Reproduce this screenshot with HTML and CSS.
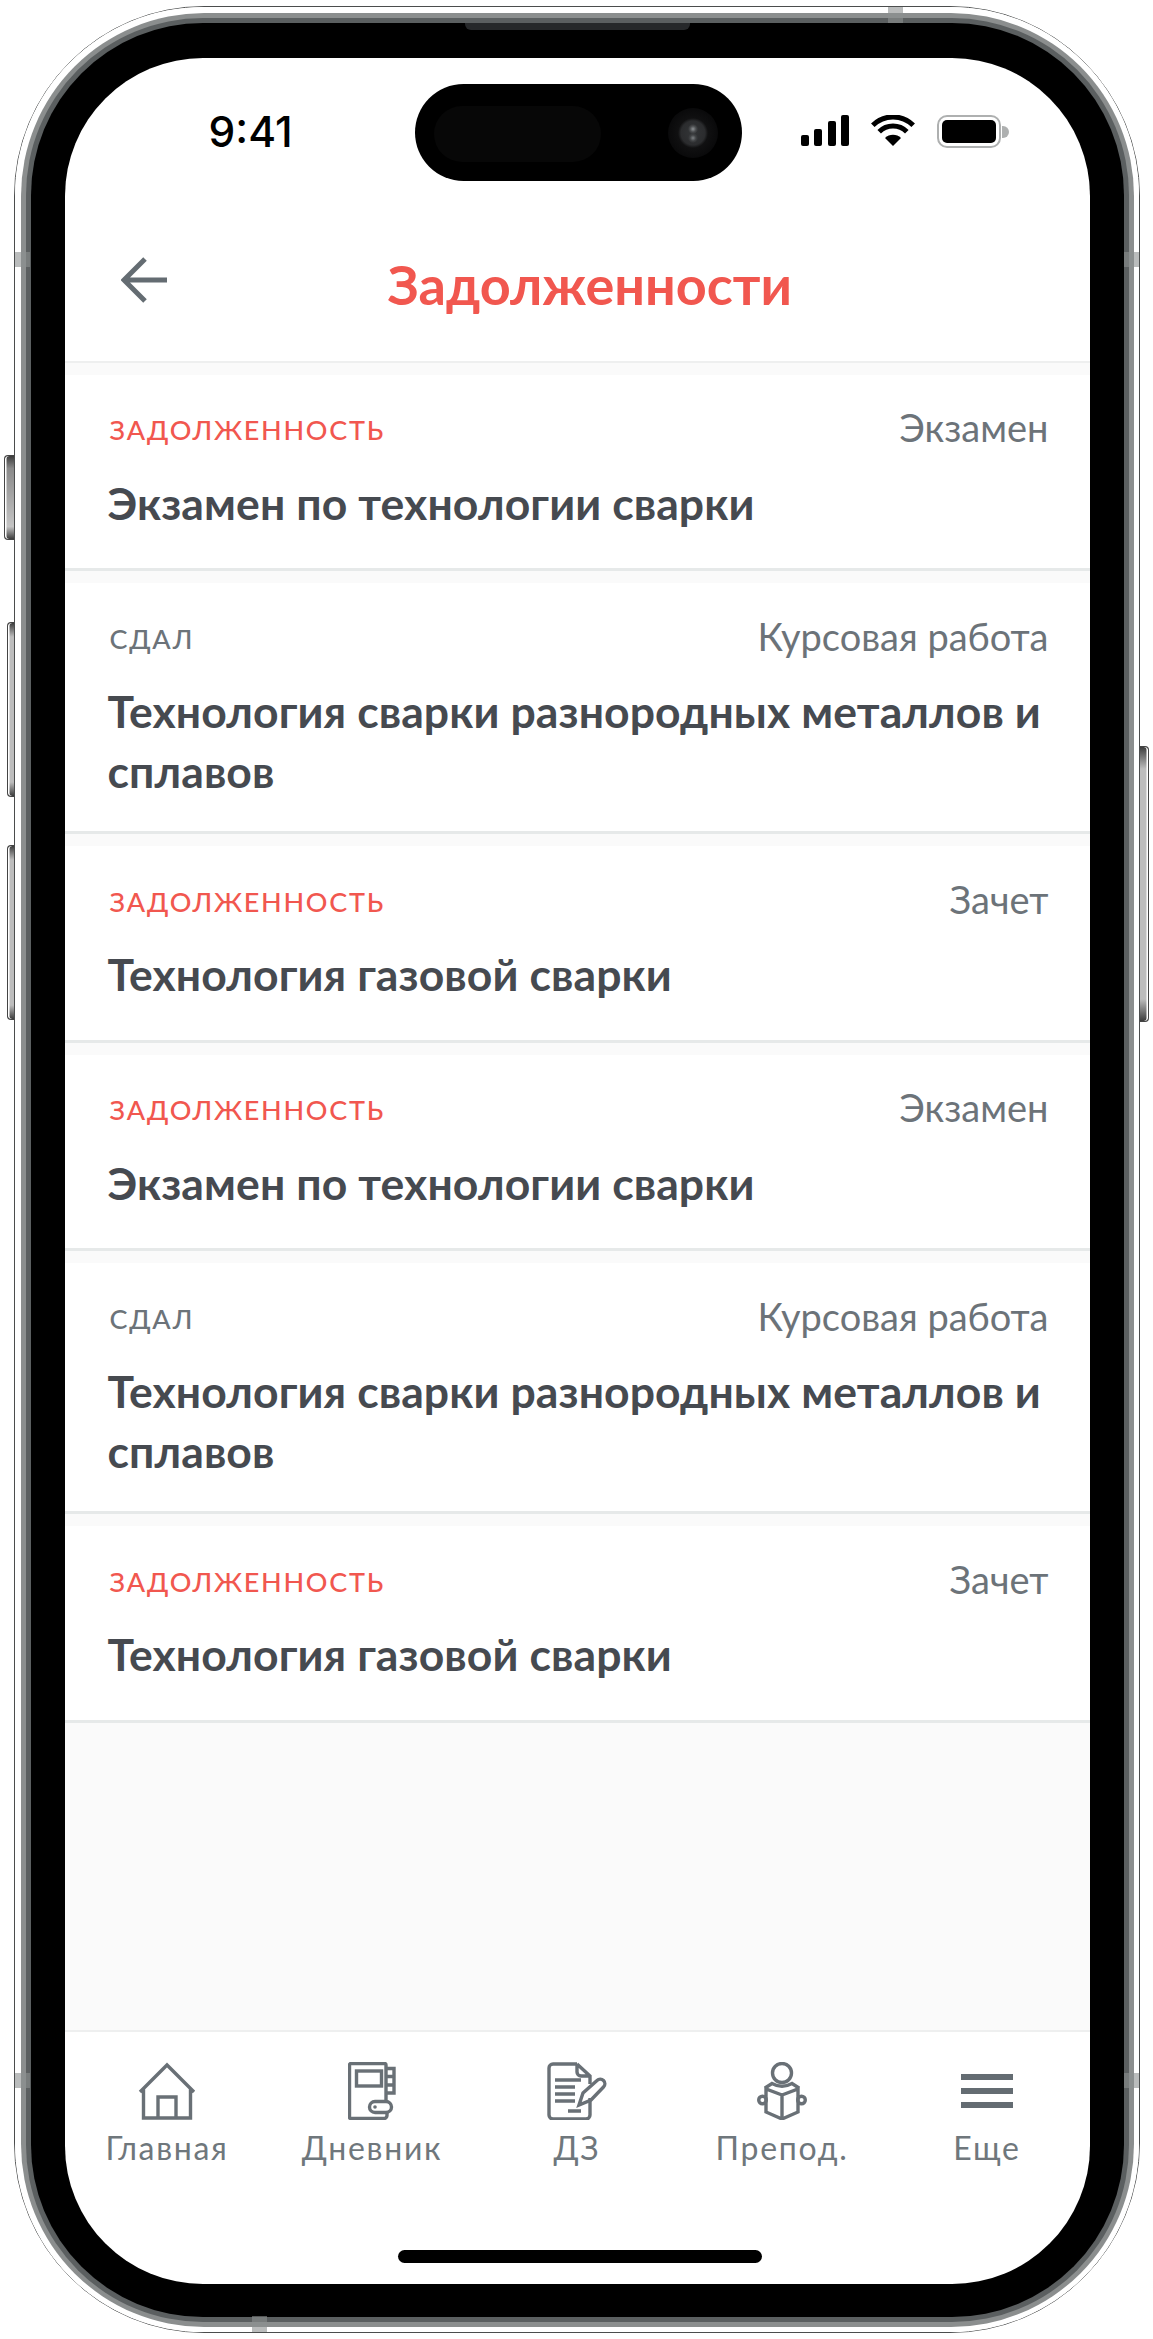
FILE: index.html
```html
<!DOCTYPE html>
<html lang="ru">
<head>
    <meta charset="UTF-8">
    <meta name="viewport" content="width=device-width, initial-scale=1.0">
    <title>Задолженности</title>
    <link rel="stylesheet" href="styles.css">
</head>
<body>
    <div class="phone">
        <!-- Side buttons and antenna bands -->
        <span class="side-btn mute"></span>
        <span class="side-btn vol-up"></span>
        <span class="side-btn vol-down"></span>
        <span class="side-btn power"></span>
        <span class="band band-left-top"></span>
        <span class="band band-right-top"></span>
        <span class="band band-left-bottom"></span>
        <span class="band band-right-bottom"></span>
        <span class="band band-top"></span>
        <span class="band band-bottom"></span>

        <div class="ring">
            <div class="edge">
                <div class="bezel">
                    <span class="speaker"></span>
                    <div class="screen">
                        <div class="island">
                            <span class="island-sensor"></span>
                            <span class="island-camera"></span>
                        </div>

                        <div class="status">
                            <span class="time">9:41</span>
                            <div class="status-icons">
                                <svg class="signal" width="48" height="31" viewBox="0 0 48 31">
                                    <rect x="0" y="20" width="8" height="11" rx="2"/>
                                    <rect x="13" y="14" width="8" height="17" rx="2"/>
                                    <rect x="27" y="6" width="8" height="25" rx="2"/>
                                    <rect x="40" y="0" width="8" height="31" rx="2"/>
                                </svg>
                                <svg class="wifi" width="44" height="31" viewBox="0 0 44 31">
                                    <path d="M22 31 L14 23 A11.3 11.3 0 0 1 30 23 Z" fill="#000"/>
                                    <path d="M8.2 16.7 A19.5 19.5 0 0 1 35.8 16.7" fill="none" stroke="#000" stroke-width="5"/>
                                    <path d="M1.8 10.3 A28.5 28.5 0 0 1 42.2 10.3" fill="none" stroke="#000" stroke-width="5"/>
                                </svg>
                                <div class="battery"><span class="battery-fill"></span></div>
                                <span class="battery-nub"></span>
                            </div>
                        </div>

                        <header class="nav">
                            <svg class="back" width="46" height="46" viewBox="0 0 46 46">
                                <path d="M46 23 H4 M24 2 L3 23 L24 44" fill="none" stroke="#646c72" stroke-width="5"/>
                            </svg>
                            <h1 class="title">Задолженности</h1>
                        </header>

                        <main class="list">
                            <article class="row">
                                <div class="row-top">
                                    <span class="tag debt">ЗАДОЛЖЕННОСТЬ</span>
                                    <span class="kind">Экзамен</span>
                                </div>
                                <h2 class="subject">Экзамен по технологии сварки</h2>
                            </article>
                            <article class="row">
                                <div class="row-top">
                                    <span class="tag">СДАЛ</span>
                                    <span class="kind">Курсовая работа</span>
                                </div>
                                <h2 class="subject">Технология сварки разнородных металлов и сплавов</h2>
                            </article>
                            <article class="row">
                                <div class="row-top">
                                    <span class="tag debt">ЗАДОЛЖЕННОСТЬ</span>
                                    <span class="kind">Зачет</span>
                                </div>
                                <h2 class="subject">Технология газовой сварки</h2>
                            </article>
                            <article class="row">
                                <div class="row-top">
                                    <span class="tag debt">ЗАДОЛЖЕННОСТЬ</span>
                                    <span class="kind">Экзамен</span>
                                </div>
                                <h2 class="subject">Экзамен по технологии сварки</h2>
                            </article>
                            <article class="row">
                                <div class="row-top">
                                    <span class="tag">СДАЛ</span>
                                    <span class="kind">Курсовая работа</span>
                                </div>
                                <h2 class="subject">Технология сварки разнородных металлов и сплавов</h2>
                            </article>
                            <article class="row">
                                <div class="row-top">
                                    <span class="tag debt">ЗАДОЛЖЕННОСТЬ</span>
                                    <span class="kind">Зачет</span>
                                </div>
                                <h2 class="subject">Технология газовой сварки</h2>
                            </article>
                        </main>

                        <footer class="tabbar">
                            <nav class="tabs">
                                <a class="tab">
                                    <svg width="58" height="58" viewBox="0 0 58 58">
                                        <path d="M2 30 L29 3 L56 30 M5.5 27 V56 H52.5 V27 M20 56 V35 H38 V56"/>
                                    </svg>
                                    <span>Главная</span>
                                </a>
                                <a class="tab">
                                    <svg width="48" height="58" viewBox="0 0 48 58">
                                        <path d="M38 39 V3 a1.5 1.5 0 0 0 -1.5 -1.5 H3 a1.5 1.5 0 0 0 -1.5 1.5 V55 a1.5 1.5 0 0 0 1.5 1.5 H36 a3 3 0 0 0 3 -3 V50"/>
                                        <rect x="8.5" y="9" width="25" height="15"/>
                                        <path d="M39 6.5 H46 V31 H39 M39 14.5 H46 M39 23 H46"/>
                                        <rect x="21.5" y="39.5" width="22" height="11" rx="5.5"/>
                                        <circle class="dot" cx="27" cy="45" r="1.8"/>
                                    </svg>
                                    <span>Дневник</span>
                                </a>
                                <a class="tab">
                                    <svg width="60" height="58" viewBox="0 0 60 58">
                                        <path d="M30 2 H6 a4 4 0 0 0 -4 4 V53 a4 4 0 0 0 4 4 H39 a4 4 0 0 0 4 -4 V36"/>
                                        <path d="M30 2 L43 14 V22 M30 2 V10 a4 4 0 0 0 4 4 H43"/>
                                        <path d="M8 18 H34 M8 25 H28 M8 32 H28 M8 39 H28 M21 49 H34"/>
                                        <path d="M32 43 L36 31 L50 18.5 a4.5 4.5 0 0 1 6.5 6.5 L44 38 Z"/>
                                    </svg>
                                    <span>ДЗ</span>
                                </a>
                                <a class="tab">
                                    <svg width="50" height="58" viewBox="0 0 50 58">
                                        <circle cx="25" cy="11" r="9.5"/>
                                        <path d="M25 33 L9 27 V50 L25 57 L41 50 V27 Z M25 33 V57"/>
                                        <path d="M8 26 L15 21.5 Q25 27 35 21.5 L42 26"/>
                                        <circle cx="5.5" cy="38" r="3.8"/>
                                        <circle cx="44.5" cy="38" r="3.8"/>
                                    </svg>
                                    <span>Препод.</span>
                                </a>
                                <a class="tab">
                                    <div class="burger">
                                        <i></i><i></i><i></i>
                                    </div>
                                    <span>Еще</span>
                                </a>
                            </nav>
                            <div class="home-bar"></div>
                        </footer>
                    </div>
                </div>
            </div>
        </div>
    </div>
</body>
</html>
```

FILE: styles.css
```css
body {
    margin: 0;
    background: #fff;
    font-family: Lato, "Open Sans", sans-serif;
}

/* Device frame */
.phone {
    position: relative;
    box-sizing: border-box;
    width: 1126px;
    height: 2327px;
    margin: 6px 0 0 14px;
    border: 1.5px solid #4b4d4d;
    border-radius: 190px;
}
.ring {
    box-sizing: border-box;
    height: 100%;
    padding: 5.5px;
    background: #fff;
    border-radius: 188px;
}
.edge {
    box-sizing: border-box;
    height: 100%;
    padding: 10px;
    background: #8b8e8e;
    border-radius: 183px;
}
.bezel {
    position: relative;
    box-sizing: border-box;
    height: 100%;
    padding: 35px 34px 33px;
    background: #000;
    border-radius: 172px;
    box-shadow: 0 0 0 5px #5b5f60;
}
.speaker {
    position: absolute;
    top: 0;
    left: 434px;
    width: 225px;
    height: 7px;
    background: #26282a;
    border-radius: 0 0 6px 6px;
}
.band {
    position: absolute;
    z-index: 1;
    background: rgba(140, 144, 144, 0.6);
}
.band-left-top, .band-right-top, .band-left-bottom, .band-right-bottom {
    width: 15px;
    height: 15px;
}
.band-left-top { top: 245px; left: 0; }
.band-right-top { top: 245px; right: 0; }
.band-left-bottom { top: 2066px; left: 0; }
.band-right-bottom { top: 2066px; right: 0; }
.band-top, .band-bottom {
    width: 15px;
    height: 16px;
}
.band-top { top: 0; left: 873px; }
.band-bottom { bottom: 0; left: 237px; }
.side-btn {
    position: absolute;
    box-sizing: border-box;
    border: 1.5px solid #444;
    border-right: 0;
    border-radius: 4px 0 0 4px;
    background: linear-gradient(#3c3c3c, #bdbdbd 8%, #bdbdbd 92%, #3c3c3c);
    box-shadow: inset 1.5px 0 0 #fff;
}
.mute { left: -11.5px; top: 448px; width: 10px; height: 85px; background: linear-gradient(#3c3c3c, #8a8a8a 15%, #c4c4c4 85%, #3c3c3c); }
.vol-up { left: -8.5px; top: 615px; width: 7px; height: 175px; }
.vol-down { left: -8.5px; top: 838px; width: 7px; height: 175px; }
.power {
    left: 1124.5px;
    top: 739px;
    width: 9px;
    height: 276px;
    border: 1.5px solid #444;
    border-left: 0;
    border-radius: 0 4px 4px 0;
    box-shadow: inset -1.5px 0 0 #fff;
}

/* Screen */
.screen {
    position: relative;
    display: flex;
    flex-direction: column;
    height: 100%;
    background: #fff;
    border-radius: 138px;
    overflow: hidden;
}
.island {
    position: absolute;
    top: 26px;
    left: 350px;
    width: 327px;
    height: 97px;
    background: #000;
    border-radius: 49px;
}
.island-sensor {
    position: absolute;
    top: 22px;
    left: 19px;
    width: 167px;
    height: 56px;
    background: #070707;
    border-radius: 28px;
}
.island-camera {
    position: absolute;
    top: 24px;
    left: 253px;
    width: 50px;
    height: 50px;
    background:
        radial-gradient(circle at 50% 42%, #8e9295 0, #4a4c4e 3px, transparent 5px),
        radial-gradient(circle at 50% 60%, #7c8083 0, #404244 3px, transparent 5px),
        radial-gradient(circle, #333537 0, #2b2c2e 12px, #101011 15px, #0a0a0b 24px);
    border-radius: 50%;
}

.status {
    display: flex;
    align-items: center;
    justify-content: space-between;
    flex: none;
    height: 148px;
    padding: 0 81px 0 144px;
}
.time {
    font-family: Inter, sans-serif;
    font-size: 42.5px;
    font-weight: 500;
    color: #000;
}
.status-icons {
    display: flex;
    align-items: flex-start;
    gap: 22px;
}
.signal { fill: #000; }
.battery {
    box-sizing: border-box;
    width: 64px;
    height: 33px;
    margin-top: 0;
    margin-right: -15px;
    padding: 3px;
    border: 2px solid #aeb0b0;
    border-radius: 10px;
}
.battery-fill {
    display: block;
    height: 100%;
    background: #000;
    border-radius: 5px;
}
.battery-nub {
    width: 7px;
    height: 12px;
    margin: 11px 0 0 -6px;
    background: #aeb0b0;
    border-radius: 0 6px 6px 0;
}

.nav {
    display: flex;
    align-items: center;
    flex: none;
    box-sizing: border-box;
    height: 157px;
    padding: 1px 0 0 56px;
    border-bottom: 2px solid #eeefef;
}
.back {
    flex: none;
    margin-bottom: 8px;
}
.title {
    margin: 2px 0 0 221px;
    font-size: 54px;
    font-weight: 700;
    color: #f1574f;
}

/* List */
.list {
    display: flex;
    flex-direction: column;
    gap: 12px;
    flex: 1;
    padding-top: 12px;
    background: #fafafa;
}
.row {
    box-sizing: border-box;
    min-height: 196.5px;
    padding: 40px 41px 30px 43px;
    background: #fff;
    border-bottom: 3px solid #e6e9e9;
}
.row-top {
    display: flex;
    align-items: center;
    justify-content: space-between;
    height: 30px;
    margin-bottom: 28px;
}
.tag {
    padding-left: 2px;
    font-size: 27px;
    font-weight: 500;
    letter-spacing: 1.7px;
    color: #6c7379;
}
.tag.debt { color: #f1574f; }
.kind {
    margin-bottom: 5px;
    font-size: 38px;
    font-weight: 400;
    color: #6c7379;
}
.subject {
    margin: 0;
    font-size: 44.5px;
    font-weight: 700;
    line-height: 60px;
    letter-spacing: 0.1px;
    color: #464a50;
}

/* Tab bar */
.tabbar {
    display: flex;
    flex-direction: column;
    justify-content: space-between;
    flex: none;
    box-sizing: border-box;
    height: 254px;
    padding: 30px 0 21px;
    border-top: 2px solid #eeefef;
}
.tabs {
    display: grid;
    grid-template-columns: repeat(5, 1fr);
}
.tab {
    display: flex;
    flex-direction: column;
    align-items: center;
    font-size: 32px;
    letter-spacing: 1.7px;
    color: #6f777c;
}
.tab svg {
    height: 58px;
    fill: none;
    stroke: #697076;
    stroke-width: 3.4;
}
.tab .dot {
    fill: #697076;
    stroke: none;
}
.tab span {
    margin-top: 5px;
    line-height: 46px;
}
.burger {
    display: flex;
    flex-direction: column;
    justify-content: center;
    gap: 8px;
    width: 52px;
    height: 58px;
}
.burger i {
    height: 6px;
    background: #646c72;
}
.home-bar {
    align-self: center;
    width: 364px;
    height: 13px;
    margin-left: 6px;
    background: #000;
    border-radius: 7px;
}
```
